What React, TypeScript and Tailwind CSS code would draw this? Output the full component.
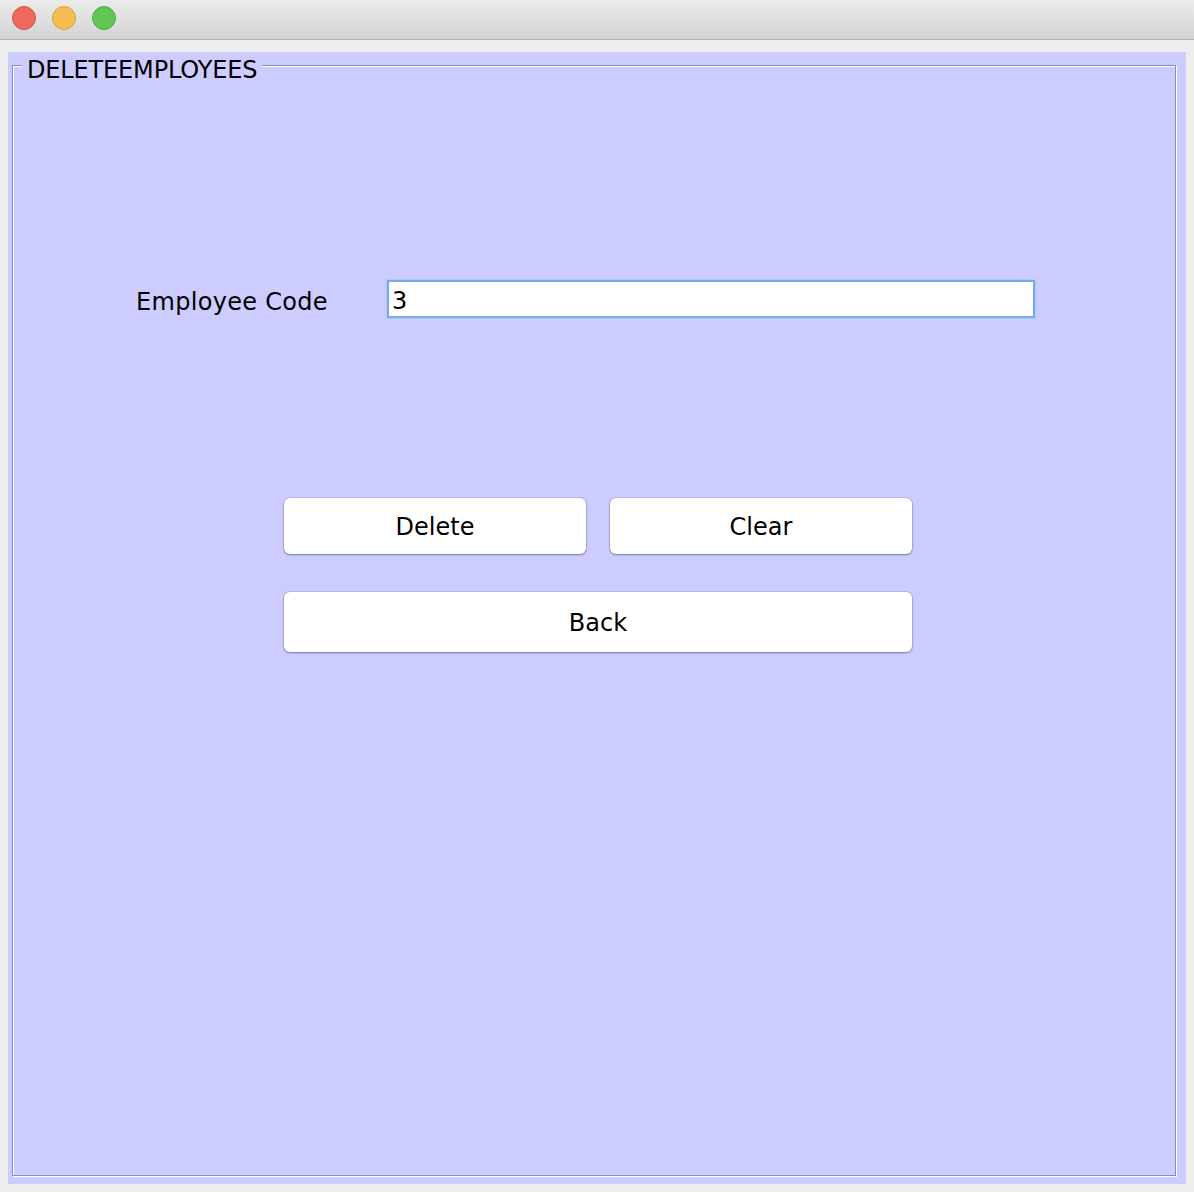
import React from "react";

const font = { fontFamily: '"DejaVu Sans", "Lucida Grande", sans-serif' };

function TrafficLight({ color, ring }: { color: string; ring: string }) {
  return <span className={`block w-[24px] h-[24px] rounded-full border ${color} ${ring}`} />;
}

function MacButton({ label, className }: { label: string; className: string }) {
  return (
    <button
      className={`bg-white rounded-[6px] pt-[2px] leading-[28px] shadow-[0_0_0_1px_rgba(90,90,140,0.18),0_1px_2px_rgba(40,40,80,0.45)] text-[24px] text-black ${className}`}
    >
      {label}
    </button>
  );
}

export default function App() {
  return (
    <div className="w-[1194px] h-[1192px] bg-[#eeeeee] flex flex-col" style={font}>
      {/* title bar */}
      <div className="h-[40px] shrink-0 bg-gradient-to-b from-[#ebebeb] to-[#d4d4d4] border-b border-[#b4b4b4] flex items-center gap-[16px] pl-[12px] pb-[4px]">
        <TrafficLight color="bg-[#ee6a5f]" ring="border-[#d5544b]" />
        <TrafficLight color="bg-[#f6be50]" ring="border-[#d9a23a]" />
        <TrafficLight color="bg-[#62c655]" ring="border-[#4fad44]" />
      </div>

      {/* content panel */}
      <div className="flex-1 mt-[12px] ml-[8px] mr-[8px] mb-[8px] bg-[#ccccff] pt-[13px] pl-[4px] pr-[10px] pb-[8px] flex">
        <div className="relative flex-1 border border-[#8c8cb8] shadow-[inset_1px_1px_0_#ffffff,1px_1px_0_#ffffff]">
          <span className="absolute left-[9px] top-[-10px] px-[5px] bg-[#ccccff] text-[24px] leading-[28px] text-black tracking-[-0.15px]">
            DELETEEMPLOYEES
          </span>

          <div className="flex items-center h-[38px] mt-[214px] ml-[123px]">
            <span className="w-[251px] pt-[5px] leading-[28px] text-[24px] text-black tracking-[0.3px]">Employee Code</span>
            <div className="w-[648px] h-[38px] bg-white border-2 border-[#78a8ee] shadow-[0_0_0_1px_#aecbf6] flex items-center pl-[3px] pt-[3px] leading-[28px] text-[24px] text-black">
              3
            </div>
          </div>

          <div className="ml-[271px] mt-[180px] w-[628px] flex flex-col gap-[38px]">
            <div className="flex gap-[24px]">
              <MacButton label="Delete" className="w-[302px] h-[56px]" />
              <MacButton label="Clear" className="w-[302px] h-[56px]" />
            </div>
            <MacButton label="Back" className="w-[628px] h-[60px]" />
          </div>
        </div>
      </div>
    </div>
  );
}
